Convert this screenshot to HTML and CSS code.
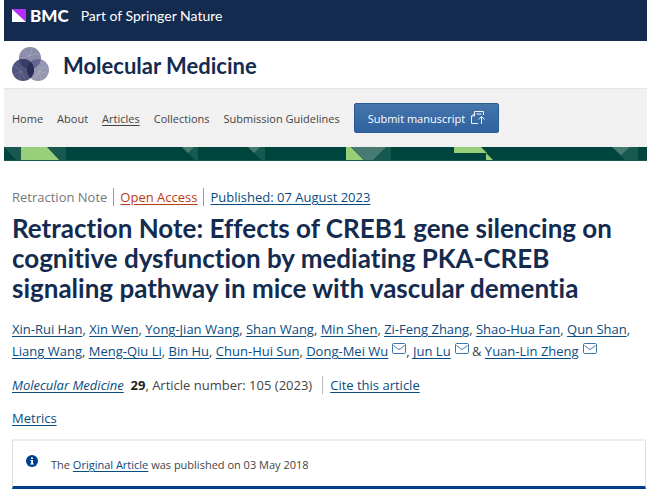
FILE: index.html
```html
<!DOCTYPE html>
<html lang="en">
<head>
  <meta charset="UTF-8">
  <meta name="viewport" content="width=device-width, initial-scale=1.0">
  <title>Retraction Note | Molecular Medicine</title>
  <link rel="stylesheet" href="styles.css">
</head>
<body>
  <svg class="defs" width="0" height="0" aria-hidden="true">
    <symbol id="mail" viewBox="0 0 14 12">
      <rect x="0.5" y="0.5" width="13" height="10" rx="1.2" fill="none" stroke="#3f76a3"/>
      <path d="M1.5 2.5 L5.8 5.9 Q7 6.8 8.2 5.9 L12.5 2.5" fill="none" stroke="#3f76a3"/>
    </symbol>
  </svg>

  <header>
    <div class="brand">
      <svg class="brand-mark" viewBox="0 0 14 13" aria-hidden="true">
        <path d="M0 0H14V13Z" fill="#b92cff"/>
        <path d="M0 0V13H14Z" fill="#fff"/>
      </svg>
      <span class="brand-name">BMC</span>
      <span class="brand-part">Part of Springer Nature</span>
    </div>

    <div class="journal">
      <svg class="journal-logo" viewBox="0 0 37 35" aria-hidden="true">
        <circle cx="18" cy="11" r="11" fill="#8b8da9"/>
        <circle cx="26" cy="23" r="11" fill="#9697b0"/>
        <circle cx="11" cy="23" r="11" fill="#51547d"/>
        <clipPath id="c-top"><circle cx="18" cy="11" r="11"/></clipPath>
        <clipPath id="c-left"><circle cx="11" cy="23" r="11"/></clipPath>
        <g clip-path="url(#c-top)">
          <circle cx="26" cy="23" r="11" fill="#64678f"/>
          <circle cx="11" cy="23" r="11" fill="#3b3d69"/>
        </g>
        <g clip-path="url(#c-left)">
          <circle cx="26" cy="23" r="11" fill="#2b2d59"/>
        </g>
        <path d="M18 9L12 4M18 9L20 1M18 9L26 6M18 9L10 11M27 24L34 19M27 24L35 27M27 24L29 33M27 24L23 32M9 24L2 19M9 24L2 28M9 24L7 33M9 24L13 32" stroke="#fff" stroke-opacity="0.15" fill="none"/>
      </svg>
      <a class="journal-title" href="#">Molecular Medicine</a>
    </div>

    <nav class="nav">
      <a href="#">Home</a>
      <a href="#">About</a>
      <a class="active" href="#">Articles</a>
      <a href="#">Collections</a>
      <a href="#">Submission Guidelines</a>
      <button class="submit" type="button">
        Submit manuscript
        <svg class="submit-icon" viewBox="0 0 14 14" aria-hidden="true">
          <path d="M3.5 2.5V0.5H12.5V4M3.5 2.5L0.5 5V12.5H7M3.5 2.5V5H0.5M5.5 3H10.5M10.5 13V6M7.5 8.5L10.5 5.5L13.5 8.5" fill="none" stroke="#fff" stroke-opacity="0.9"/>
        </svg>
      </button>
    </nav>

    <svg class="banner" viewBox="0 0 643 14" preserveAspectRatio="xMinYMin slice" aria-hidden="true">
      <rect width="643" height="14" fill="#00453d"/>
      <path d="M0 0H17V14H13ZM43 0H62V14H56ZM178 0H194V14H192ZM244 0H261V14H258Z" fill="#17594f"/>
      <path d="M178 0H190L184 6ZM244 0H256L250 6Z" fill="#477a71"/>
      <path d="M17 0H43L56 14H17ZM342 0H347L361 14H342Z" fill="#98d07a"/>
      <path d="M347 0H387V14H361Z" fill="#17594f"/>
      <path d="M347 0H382L368 14H361Z" fill="#477a71"/>
      <path d="M450 0H477L483 6H450ZM482 6L490 14H482Z" fill="#98d07a"/>
      <path d="M608 0H634V14H622Z" fill="#17594f"/>
      <path d="M608 0H626L617 8Z" fill="#477a71"/>
      <path d="M0 13.5H643" stroke="#17594f"/>
    </svg>
  </header>

  <main>
    <ul class="meta">
      <li>Retraction Note</li>
      <li><a class="open" href="#">Open Access</a></li>
      <li><a href="#">Published: 07 August 2023</a></li>
    </ul>

    <h1>Retraction Note: Effects of CREB1 gene silencing on cognitive dysfunction by mediating PKA-CREB signaling pathway in mice with vascular dementia</h1>

    <p class="authors">
      <a href="#">Xin-Rui Han</a>, <a href="#">Xin Wen</a>, <a href="#">Yong-Jian Wang</a>, <a href="#">Shan Wang</a>, <a href="#">Min Shen</a>, <a href="#">Zi-Feng Zhang</a>, <a href="#">Shao-Hua Fan</a>, <a href="#">Qun Shan</a>, <a href="#">Liang Wang</a>, <a href="#">Meng-Qiu Li</a>, <a href="#">Bin Hu</a>, <a href="#">Chun-Hui Sun</a>, <a href="#">Dong-Mei Wu</a><svg class="mail"><use href="#mail"/></svg>, <a href="#">Jun Lu</a><svg class="mail"><use href="#mail"/></svg> &amp; <a href="#">Yuan-Lin Zheng</a><svg class="mail"><use href="#mail"/></svg>
    </p>

    <div class="citation">
      <span><a href="#"><i>Molecular Medicine</i></a>&nbsp; <b>29</b>, Article number: 105 (2023)</span>
      <a class="cite" href="#">Cite this article</a>
    </div>

    <p class="metrics"><a href="#">Metrics</a></p>

    <div class="notice">
      <svg class="notice-icon" viewBox="0 0 12 12" aria-hidden="true">
        <circle cx="6" cy="6" r="6" fill="#003f8d"/>
        <path d="M5 2.5H7V4H5ZM4.5 5H7V8.5H7.8V9.5H4.3V8.5H5.2V6H4.5Z" fill="#fff"/>
      </svg>
      <p>The <a href="#">Original Article</a> was published on 03 May 2018</p>
    </div>
  </main>
</body>
</html>
```
FILE: styles.css
```css
* {
  box-sizing: border-box;
}

body {
  margin: 0 0 0 4px;
  background: #fff;
  color: #444;
  font-family: "Open Sans", "Noto Sans", sans-serif;
  font-size: 13px;
  line-height: 22px;
  font-variant-ligatures: none;
}

a {
  color: #0a4b7f;
  text-underline-offset: 2px;
}

p, h1, ul {
  margin: 0;
  padding: 0;
}

.defs {
  position: absolute;
}

.brand {
  display: flex;
  align-items: center;
  height: 41px;
  padding: 0 8px 10px;
  background: #142b50;
  color: #fff;
  font-family: Lato, sans-serif;
}

.brand-mark {
  width: 14px;
  height: 13px;
}

.brand-name {
  margin-left: 4px;
  font-size: 17px;
  font-weight: 900;
}

.brand-part {
  margin-left: 12px;
  font-size: 14px;
}

.journal {
  display: flex;
  align-items: center;
  gap: 14px;
  height: 48px;
  padding: 0 8px;
  border-bottom: 1px solid #e4e4e4;
}

.journal-logo {
  width: 37px;
  height: 35px;
}

.journal-title {
  padding-top: 2px;
  color: #142b50;
  font-family: Lato, sans-serif;
  font-size: 22px;
  font-weight: 700;
  text-decoration: none;
}

.nav {
  display: flex;
  align-items: center;
  gap: 14px;
  height: 58px;
  padding: 0 8px;
  background: #f1f1f1;
  font-size: 11px;
  white-space: nowrap;
}

.nav a {
  padding-top: 2px;
  color: #444;
  text-decoration: none;
}

.nav .active {
  text-decoration: underline;
}

.submit {
  display: flex;
  align-items: center;
  gap: 6px;
  height: 30px;
  padding: 0 13px;
  border: 1px solid #2c5c98;
  border-radius: 2px;
  background: linear-gradient(#4575ab, #3062a0);
  color: #fff;
  font-family: inherit;
  font-size: 11px;
}

.submit-icon {
  width: 14px;
  height: 14px;
}

.banner {
  display: block;
  width: 100%;
  height: 14px;
}

main {
  padding: 25px 0 0 8px;
}

.meta {
  display: flex;
  list-style: none;
  color: #777;
}

.meta li + li {
  margin-left: 6px;
  padding-left: 6px;
  border-left: 1px solid #999;
}

.meta li {
  height: 18px;
  margin: 2px 0;
  line-height: 18px;
}

.meta .open {
  color: #b83c12;
}

h1 {
  padding: 5px 30px 0 0;
  color: #142b50;
  font-family: Lato, sans-serif;
  font-size: 26px;
  font-weight: 700;
  line-height: 30px;
}

.authors {
  margin-top: 15px;
}

.mail {
  width: 14px;
  height: 12px;
  margin-left: 4px;
  vertical-align: 1px;
}

.citation {
  display: flex;
  margin-top: 12px;
}

.cite {
  height: 18px;
  margin: 2px 0 2px 10px;
  padding-left: 7px;
  border-left: 1px solid #bbb;
  line-height: 18px;
}

.citation b {
  color: #222;
}

.metrics {
  margin-top: 11px;
}

.notice {
  display: flex;
  gap: 13px;
  height: 50px;
  margin: 10px 1px 0 0;
  padding: 14px 13px 0;
  border: 1px solid #ddd;
  border-top: 2px solid #eee;
  border-bottom: 3px solid #003f8d;
  font-size: 11px;
}

.notice-icon {
  width: 12px;
  height: 12px;
}

.notice p {
  line-height: 20px;
}
```
